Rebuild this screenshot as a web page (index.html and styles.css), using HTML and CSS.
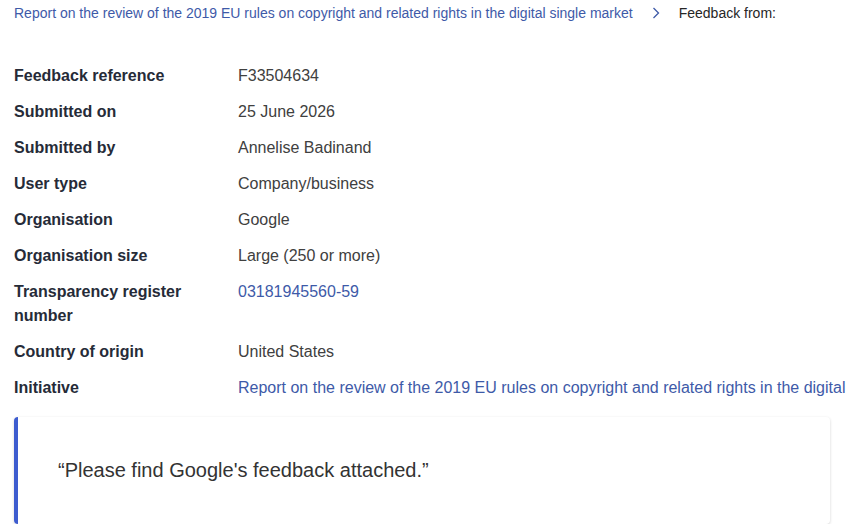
FILE: index.html
```
<!DOCTYPE html>
<html lang="en">
<head>
  <meta charset="UTF-8" />
  <title>Feedback from: Google</title>
  <link rel="stylesheet" href="styles.css">
</head>
<body>
  <nav class="breadcrumb">
    <a href="#" class="crumb-link">Report on the review of the 2019 EU rules on copyright and related rights in the digital single market</a>
    <svg class="crumb-sep" width="8" height="12" viewBox="0 0 8 12" aria-hidden="true">
      <path d="M1.5 1 L6.5 6 L1.5 11" fill="none" stroke="#3e5aa8" stroke-width="1.3"/>
    </svg>
    <span class="crumb-current">Feedback from:</span>
  </nav>

  <dl class="details">
    <dt>Feedback reference</dt>
    <dd>F33504634</dd>
    <dt>Submitted on</dt>
    <dd>25 June 2026</dd>
    <dt>Submitted by</dt>
    <dd>Annelise Badinand</dd>
    <dt>User type</dt>
    <dd>Company/business</dd>
    <dt>Organisation</dt>
    <dd>Google</dd>
    <dt>Organisation size</dt>
    <dd>Large (250 or more)</dd>
    <dt>Transparency register number</dt>
    <dd><a href="#">03181945560-59</a></dd>
    <dt>Country of origin</dt>
    <dd>United States</dd>
    <dt>Initiative</dt>
    <dd class="nowrap"><a href="#">Report on the review of the 2019 EU rules on copyright and related rights in the digital single market</a></dd>
  </dl>

  <blockquote class="feedback-quote">
    <p>&ldquo;Please find Google's feedback attached.&rdquo;</p>
  </blockquote>
</body>
</html>
```
FILE: styles.css
```
html {
  overflow: hidden;
}
body {
  font-family: "Liberation Sans", Arial, sans-serif;
  color: #404040;
  background: #fff;
  margin: 0;
  padding: 3px 0 0 14px;
  width: 1200px;
}
a {
  color: #3e5aa8;
  text-decoration: none;
}
.breadcrumb {
  font-size: 14px;
  line-height: 20px;
  display: flex;
  align-items: center;
}
.crumb-sep {
  margin: 0 19px 0 19px;
}
.crumb-current {
  color: #262626;
}
.details {
  display: grid;
  grid-template-columns: 224px 1fr;
  row-gap: 12px;
  margin: 41px 0 0;
  font-size: 16px;
  line-height: 24px;
}
.details dt {
  font-weight: bold;
  color: #262b38;
  width: 180px;
}
.details dd {
  margin: 0;
}
.nowrap {
  white-space: nowrap;
}
.feedback-quote {
  margin: 17px 0 0;
  width: 816px;
  height: 107px;
  box-sizing: border-box;
  border-left: 4px solid #3d5ccf;
  border-radius: 4px;
  box-shadow: 0 1px 3px rgba(0, 0, 0, 0.18);
  padding: 41px 0 0 40px;
}
.feedback-quote p {
  margin: 0;
  font-size: 20px;
  line-height: 24px;
  color: #333;
}
```
